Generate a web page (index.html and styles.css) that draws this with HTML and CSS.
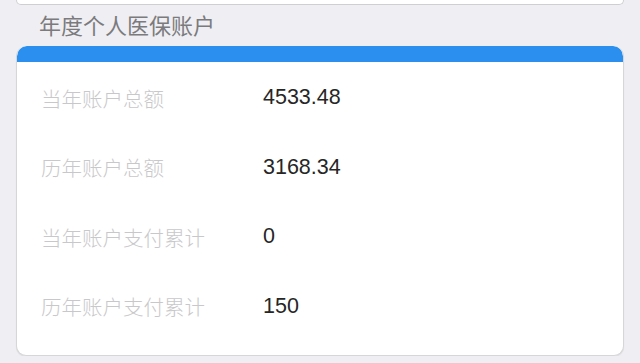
FILE: index.html
```html
<!DOCTYPE html>
<html lang="zh-CN">
<head>
<meta charset="utf-8">
<link rel="stylesheet" href="styles.css">
</head>
<body>
<div class="top-card"></div>
<h2 class="section-title">年度个人医保账户</h2>
<div class="card">
  <div class="card-head"></div>
  <div class="rows">
    <div class="row"><span class="label">当年账户总额</span><span class="value">4533.48</span></div>
    <div class="row"><span class="label">历年账户总额</span><span class="value">3168.34</span></div>
    <div class="row"><span class="label">当年账户支付累计</span><span class="value">0</span></div>
    <div class="row"><span class="label">历年账户支付累计</span><span class="value">150</span></div>
  </div>
</div>
</body>
</html>
```
FILE: styles.css
```css
html, body {
  margin: 0;
  padding: 0;
  background: #efeff3;
  font-family: "Liberation Sans", "Noto Sans CJK SC", sans-serif;
}
.top-card {
  height: 4px;
  margin: 0 16px;
  background: #fff;
  border: 1px solid #cfcfd2;
  border-top: none;
  border-radius: 0 0 10px 10px;
}
.section-title {
  margin: 0;
  padding: 1px 0 0 39px;
  height: 40px;
  box-sizing: content-box;
  font-family: "Noto Sans CJK SC", sans-serif;
  font-weight: normal;
  font-size: 22px;
  line-height: 36px;
  color: #7b7b7e;
}
.card {
  margin: 0 16px;
  background: #fff;
  border: 1px solid #d6d6d9;
  border-top: none;
  border-radius: 10px;
  overflow: hidden;
  box-shadow: 0 1px 1px rgba(0,0,0,0.08);
}
.card-head {
  height: 16px;
  background: #2b8ff0;
  border-radius: 10px 10px 0 0;
}
.rows {
  padding: 1px 0 14px 0;
}
.row {
  display: flex;
  align-items: center;
  height: 69.5px;
  padding-left: 24px;
}
.label {
  width: 222px;
  font-family: "Noto Sans CJK SC", sans-serif;
  font-size: 20.5px;
  color: #c8c8ca;
  font-weight: 300;
}
.value {
  font-family: "Liberation Sans", sans-serif;
  font-size: 21.5px;
  color: #262626;
}
```
